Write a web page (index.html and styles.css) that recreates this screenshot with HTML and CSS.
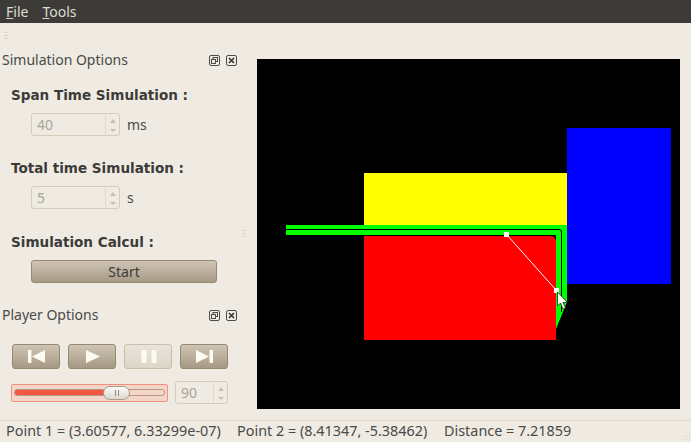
FILE: index.html
```html
<!DOCTYPE html>
<html lang="en">
<head>
    <meta charset="UTF-8">
    <title>Simulation</title>
    <link rel="stylesheet" href="styles.css">
</head>
<body>
    <header class="menubar">
        <span class="menu-item"><u>F</u>ile</span>
        <span class="menu-item"><u>T</u>ools</span>
    </header>
    <div class="toolbar"><span class="grip grip-toolbar"></span></div>

    <main class="content">
        <aside class="sidebar">
            <section class="dock dock-sim">
                <div class="dock-title">
                    <span>Simulation Options</span>
                    <span class="dock-icons">
                        <svg class="dock-icon" viewBox="0 0 11 11"><rect x="0.5" y="0.5" width="10" height="10" rx="1.5" fill="none" stroke="#4c4c4c"/><rect x="4" y="2.5" width="4.5" height="4" fill="none" stroke="#4c4c4c"/><rect x="2.5" y="4.5" width="4" height="4" fill="#efebe3" stroke="#4c4c4c"/></svg>
                        <svg class="dock-icon" viewBox="0 0 11 11"><rect x="0.5" y="0.5" width="10" height="10" rx="1.5" fill="none" stroke="#4c4c4c"/><path d="M3 3l5 5M8 3l-5 5" stroke="#333" stroke-width="1.6"/></svg>
                    </span>
                </div>

                <h3 class="field-label label-first">Span Time Simulation :</h3>
                <div class="field-row">
                    <div class="spinbox">
                        <span class="spin-value">40</span>
                        <span class="spin-arrows"><i class="arrow-up"></i><i class="arrow-down"></i></span>
                    </div>
                    <span class="unit">ms</span>
                </div>

                <h3 class="field-label">Total time Simulation :</h3>
                <div class="field-row">
                    <div class="spinbox">
                        <span class="spin-value">5</span>
                        <span class="spin-arrows"><i class="arrow-up"></i><i class="arrow-down"></i></span>
                    </div>
                    <span class="unit">s</span>
                </div>

                <h3 class="field-label label-calcul">Simulation Calcul :</h3>
                <button class="start-btn">Start</button>
            </section>

            <section class="dock dock-player">
                <div class="dock-title">
                    <span>Player Options</span>
                    <span class="dock-icons">
                        <svg class="dock-icon" viewBox="0 0 11 11"><rect x="0.5" y="0.5" width="10" height="10" rx="1.5" fill="none" stroke="#4c4c4c"/><rect x="4" y="2.5" width="4.5" height="4" fill="none" stroke="#4c4c4c"/><rect x="2.5" y="4.5" width="4" height="4" fill="#efebe3" stroke="#4c4c4c"/></svg>
                        <svg class="dock-icon" viewBox="0 0 11 11"><rect x="0.5" y="0.5" width="10" height="10" rx="1.5" fill="none" stroke="#4c4c4c"/><path d="M3 3l5 5M8 3l-5 5" stroke="#333" stroke-width="1.6"/></svg>
                    </span>
                </div>

                <div class="player-buttons">
                    <button class="player-btn"><svg viewBox="0 0 17 13"><path d="M0 0h3.500v13H0zM17 0v13L4 6.500z" fill="#fdfbf0"/></svg></button>
                    <button class="player-btn"><svg viewBox="0 0 17 13"><path d="M2 0l14 6.500L2 13z" fill="#fdfbf0"/></svg></button>
                    <button class="player-btn player-btn-off"><svg viewBox="0 0 17 13"><path d="M1.500 0h5v13h-5zM11.500 0h5v13h-5z" fill="#fdfbf0"/></svg></button>
                    <button class="player-btn"><svg viewBox="0 0 17 13"><path d="M0 0l13 6.500L0 13zM13.500 0H17v13h-3.500z" fill="#fdfbf0"/></svg></button>
                </div>

                <div class="volume-row">
                    <div class="slider">
                        <div class="slider-groove">
                            <div class="slider-fill"></div>
                        </div>
                        <div class="slider-handle"></div>
                    </div>
                    <div class="spinbox spinbox-small">
                        <span class="spin-value">90</span>
                        <span class="spin-arrows"><i class="arrow-up"></i><i class="arrow-down"></i></span>
                    </div>
                </div>
            </section>
        </aside>

        <div class="splitter"><span class="grip grip-splitter"></span></div>

        <svg class="scene" viewBox="257 59 423 350">
            <rect x="567" y="128" width="104" height="156" fill="#0000ff"/>
            <rect x="364" y="173" width="203" height="53" fill="#ffff00"/>
            <path d="M364 236H550Q556 236 556 242V340H364z" fill="#ff0000"/>
            <path d="M286 225H567V302L556 329V236Q556 235 555 235H286z" fill="#00ff00"/>
            <path d="M286 229.500H559Q561.500 229.500 561.500 232V312" fill="none" stroke="#000" stroke-width="1"/>
            <line x1="506.500" y1="234.500" x2="556.500" y2="290.500" stroke="#fff" stroke-width="1"/>
            <rect x="504" y="232" width="5" height="5" fill="#fff"/>
            <rect x="554" y="288" width="5" height="5" fill="#fff"/>
            <path d="M557.500 292V306L560.500 303L563 309L565.500 308L563 302.500H567.500z" fill="#fff" stroke="#222" stroke-width="0.8"/>
        </svg>
    </main>

    <footer class="statusbar">
        <span class="status-point1">Point 1 = (3.60577, 6.33299e-07)</span>
        <span class="status-point2">Point 2 = (8.41347, -5.38462)</span>
        <span>Distance = 7.21859</span>
        <svg class="size-grip" viewBox="0 0 11 11">
            <path d="M9 1h1v1H9zM6 4h1v1H6zM9 4h1v1H9zM3 7h1v1H3zM6 7h1v1H6zM9 7h1v1H9zM0 10h1v1H0zM3 10h1v1H3zM6 10h1v1H6zM9 10h1v1H9z" fill="#d8d2c5"/>
        </svg>
    </footer>
</body>
</html>
```

FILE: styles.css
```css
html, body {
    height: 100%;
}
body {
    margin: 0;
    width: 691px;
    height: 442px;
    overflow: hidden;
    display: flex;
    flex-direction: column;
    background-color: #efebe3;
    color: #3c3c3c;
    font-family: "Noto Sans", Arial, sans-serif;
    font-size: 14px;
}
.menubar {
    height: 23px;
    flex-shrink: 0;
    display: flex;
    align-items: center;
    gap: 14px;
    padding: 0 0 1px 6px;
    box-sizing: border-box;
    background-color: #3c3b37;
    color: #dfdbd2;
    font-size: 14px;
}
.toolbar {
    height: 25px;
    flex-shrink: 0;
    padding: 9px 0 0 4px;
    box-sizing: border-box;
}
.grip {
    display: block;
    width: 4px;
    height: 7px;
    background: repeating-linear-gradient(to bottom, #dcd6ca 0, #dcd6ca 1px, transparent 1px, transparent 3px);
}
.content {
    display: flex;
    height: 372px;
    flex-shrink: 0;
}
.sidebar {
    width: 241px;
    flex-shrink: 0;
}
.dock-title {
    display: flex;
    justify-content: space-between;
    align-items: center;
    height: 22px;
    padding-left: 2px;
    font-size: 14px;
    color: #4a4a48;
}
.dock-icons {
    display: flex;
    gap: 6px;
    padding: 2px 4px 0 0;
}
.dock-icon {
    width: 11px;
    height: 11px;
}
.field-label {
    margin: 24px 0 10px 11px;
    height: 16px;
    line-height: 16px;
    font-family: "DejaVu Sans", sans-serif;
    font-size: 13.55px;
    font-weight: bold;
    color: #3c3b37;
}
.label-first {
    margin-top: 17px;
}
.label-calcul {
    margin-top: 25px;
}
.field-row {
    display: flex;
    align-items: center;
    gap: 7px;
    margin-left: 31px;
}
.spinbox {
    display: flex;
    width: 89px;
    height: 23px;
    box-sizing: border-box;
    border: 1px solid #d5cdbc;
    border-radius: 3px;
    color: #a8a498;
}
.spin-value {
    flex: 1;
    padding-left: 5px;
    line-height: 21px;
    font-size: 14px;
}
.spin-arrows {
    width: 13px;
    display: flex;
    flex-direction: column;
    justify-content: space-between;
    align-items: center;
    padding: 5px 0 3px;
    border-left: 1px solid #e0dace;
}
.arrow-up, .arrow-down {
    width: 0;
    height: 0;
    border-left: 3px solid transparent;
    border-right: 3px solid transparent;
}
.arrow-up {
    border-bottom: 4px solid #c4bfb2;
}
.arrow-down {
    border-top: 3px solid #c4bfb2;
}
.unit {
    font-size: 14px;
    color: #4a4a48;
}
.start-btn {
    display: block;
    margin: 0 0 0 31px;
    width: 186px;
    height: 23px;
    padding: 0;
    border: 1px solid #94886f;
    border-radius: 3px;
    background: linear-gradient(to bottom, #cfc4b5, #a69a86);
    color: #3c3b37;
    font-family: inherit;
    font-size: 14px;
}
.dock-player {
    margin-top: 20px;
}
.player-buttons {
    display: flex;
    gap: 8px;
    margin: 19px 0 0 12px;
}
.player-btn {
    display: flex;
    align-items: center;
    justify-content: center;
    width: 48px;
    height: 25px;
    padding: 0;
    border: 1px solid #94886f;
    border-radius: 3px;
    background: linear-gradient(to bottom, #cfc4b5, #a69a86);
}
.player-btn svg {
    width: 17px;
    height: 13px;
}
.player-btn-off {
    border-color: #c8bea9;
    background: linear-gradient(to bottom, #e9e4da, #dcd6c9);
}
.volume-row {
    display: flex;
    align-items: center;
    gap: 7px;
    margin: 12px 0 0 11px;
}
.slider {
    position: relative;
    display: flex;
    align-items: center;
    width: 157px;
    height: 18px;
    box-sizing: border-box;
    padding: 0 2px;
    border: 1px solid #f2917b;
    border-radius: 2px;
    background-color: #f5d5c9;
}
.slider-groove {
    flex: 1;
    height: 5px;
    border: 1px solid #b09a88;
    border-radius: 3px;
    overflow: hidden;
}
.slider-fill {
    width: 62%;
    height: 100%;
    background-color: #f4573f;
}
.slider-handle {
    position: absolute;
    left: 91px;
    top: 1px;
    width: 27px;
    height: 14px;
    box-sizing: border-box;
    border: 1px solid #a69f90;
    border-radius: 7px;
    background: linear-gradient(to right, transparent 11px, #8f8a7e 11px, #8f8a7e 12px, transparent 12px, transparent 14px, #8f8a7e 14px, #8f8a7e 15px, transparent 15px) center / 100% 6px no-repeat, linear-gradient(to bottom, #fafaf7, #dcd8cf);
}
.spinbox-small {
    width: 53px;
}
.splitter {
    width: 16px;
    flex-shrink: 0;
    padding: 182px 0 0 1px;
    box-sizing: border-box;
}
.scene {
    display: block;
    width: 423px;
    height: 350px;
    margin-top: 11px;
    flex-shrink: 0;
    background-color: #000;
}
.statusbar {
    flex: 1;
    display: flex;
    align-items: center;
    position: relative;
    padding: 0 0 3px 6px;
    border-top: 1px solid #e0dbd0;
    font-size: 14.4px;
    color: #4a4a48;
}
.status-point1 {
    width: 231px;
}
.status-point2 {
    width: 207px;
}
.size-grip {
    position: absolute;
    right: 0;
    bottom: 0;
    width: 11px;
    height: 11px;
}
```
